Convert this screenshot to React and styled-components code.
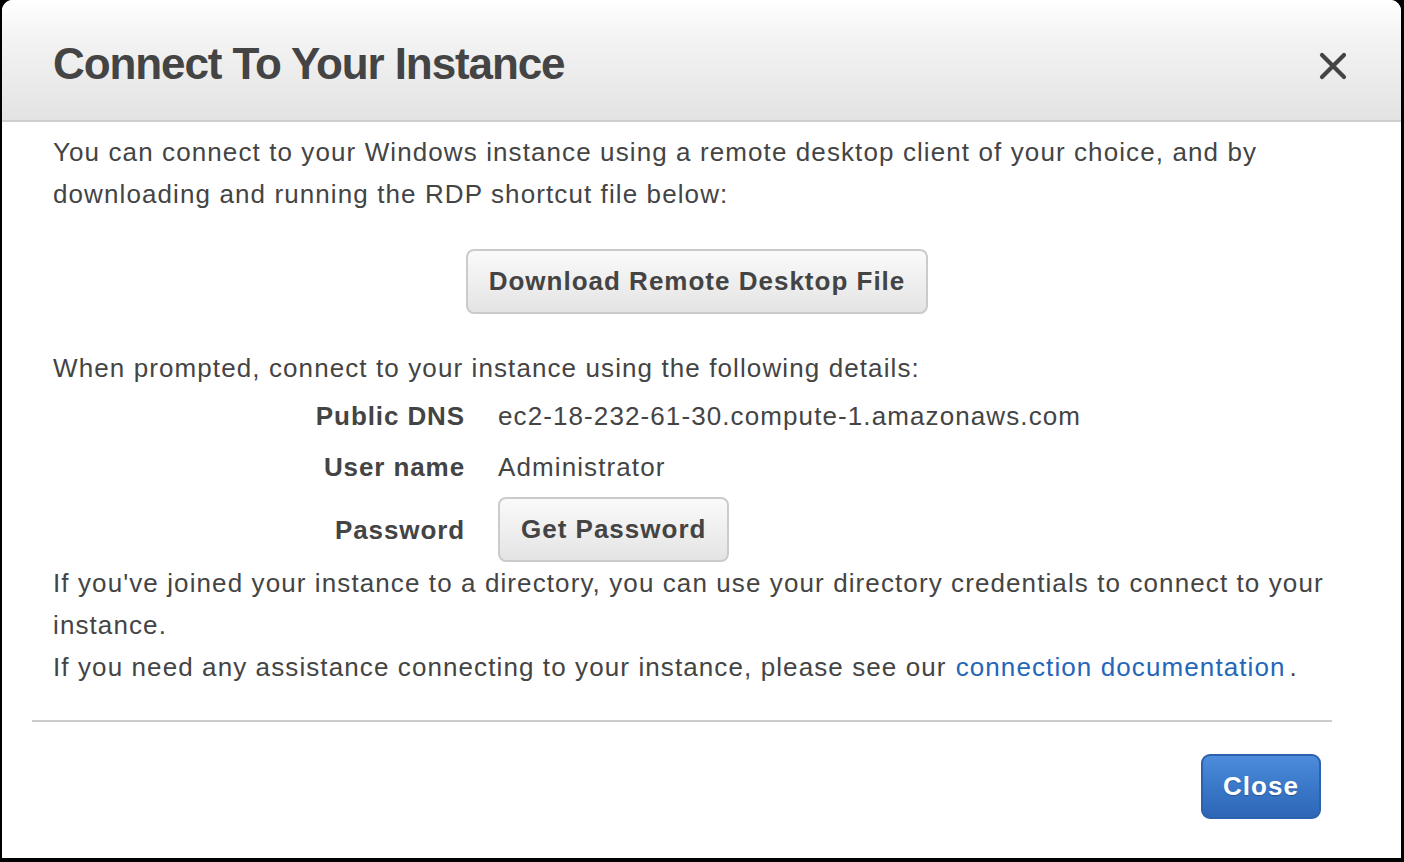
import React from 'react'
import styled, { createGlobalStyle } from 'styled-components'

const Global = createGlobalStyle`
html, body {
  margin:0;
  padding:0;
  background:#000;
}
body {
  font-family:"Liberation Sans", Arial, Helvetica, sans-serif;
}
`;

const Page = styled.div`
width:1404px;
height:862px;
background:#000;
padding:0 3px 4px 2px;
box-sizing:border-box;
`;

const Modal = styled.section`
background:#fff;
height:100%;
border-radius:11px 11px 0 0;
overflow:hidden;
display:flex;
flex-direction:column;
color:#444;
`;

const Header = styled.header`
height:122px;
box-sizing:border-box;
border-bottom:2px solid #cfcfcf;
background:linear-gradient(to bottom, #ffffff 0%, #f4f4f4 30%, #e3e3e3 100%);
display:flex;
align-items:center;
justify-content:space-between;
padding:8px 54px 0 51px;
`;

const Title = styled.h1`
margin:0;
font-size:44px;
font-weight:700;
color:#444;
letter-spacing:-1.1px;
`;

const CloseX = styled.button`
border:0;
background:none;
padding:0;
width:28px;
height:28px;
cursor:pointer;
margin-top:4px;
svg { display:block; }
`;

const Body = styled.div`
padding:9px 60px 0 51px;
font-size:26px;
line-height:42px;
letter-spacing:1.1px;
color:#444;
`;

const Text = styled.p`
margin:0;
`;

const Centered = styled.div`
display:flex;
justify-content:center;
margin:34px 0 33px;
`;

const GreyButton = styled.button`
font-family:inherit;
font-size:26px;
font-weight:700;
letter-spacing:1px;
color:#444;
height:65px;
padding:0 21px;
border:2px solid #cbcbcb;
border-radius:8px;
background:linear-gradient(to bottom, #fafafa 0%, #efefef 50%, #e4e4e4 100%);
cursor:pointer;
`;

const Details = styled.div`
display:grid;
grid-template-columns:412px 1fr;
column-gap:33px;
row-gap:9px;
margin-top:6px;
align-items:center;
`;

const Label = styled.div`
text-align:right;
font-weight:700;
letter-spacing:0.9px;
`;

const Value = styled.div``;

const Link = styled.a`
color:#2466b8;
text-decoration:none;
margin-left:9px;
margin-right:4px;
`;

const Divider = styled.hr`
border:0;
border-top:2px solid #cccccc;
margin:32px 69px 0 30px;
`;

const Footer = styled.div`
display:flex;
justify-content:flex-end;
padding:32px 80px 0 0;
`;

const PrimaryButton = styled.button`
font-family:inherit;
font-size:26px;
font-weight:700;
letter-spacing:1px;
color:#fff;
width:120px;
height:65px;
border:2px solid #2c62ad;
border-radius:9px;
background:linear-gradient(to bottom, #4d8ddb 0%, #3a78c9 50%, #2e66b6 100%);
text-shadow:0 1px 1px rgba(0,0,0,0.25);
cursor:pointer;
`;

const App = () => {
  return (
    <>
      <Global />
      <Page>
        <Modal>
          <Header>
            <Title>Connect To Your Instance</Title>
            <CloseX aria-label="Close">
              <svg width="28" height="28" viewBox="0 0 28 28">
                <path d="M3 3 L25 25 M25 3 L3 25" stroke="#444" strokeWidth="4.2" strokeLinecap="round" />
              </svg>
            </CloseX>
          </Header>
          <Body>
            <Text>
              You can connect to your Windows instance using a remote desktop client of your choice, and by downloading and running the RDP shortcut file below:
            </Text>
            <Centered>
              <GreyButton>Download Remote Desktop File</GreyButton>
            </Centered>
            <Text>When prompted, connect to your instance using the following details:</Text>
            <Details>
              <Label>Public DNS</Label>
              <Value>ec2-18-232-61-30.compute-1.amazonaws.com</Value>
              <Label>User name</Label>
              <Value>Administrator</Value>
              <Label>Password</Label>
              <Value>
                <GreyButton>Get Password</GreyButton>
              </Value>
            </Details>
            <Text>
              If you've joined your instance to a directory, you can use your directory credentials to connect to your instance.
            </Text>
            <Text>
              If you need any assistance connecting to your instance, please see our
              <Link href="#">connection documentation</Link>.
            </Text>
          </Body>
          <Divider />
          <Footer>
            <PrimaryButton>Close</PrimaryButton>
          </Footer>
        </Modal>
      </Page>
    </>
  )
}

export default App
